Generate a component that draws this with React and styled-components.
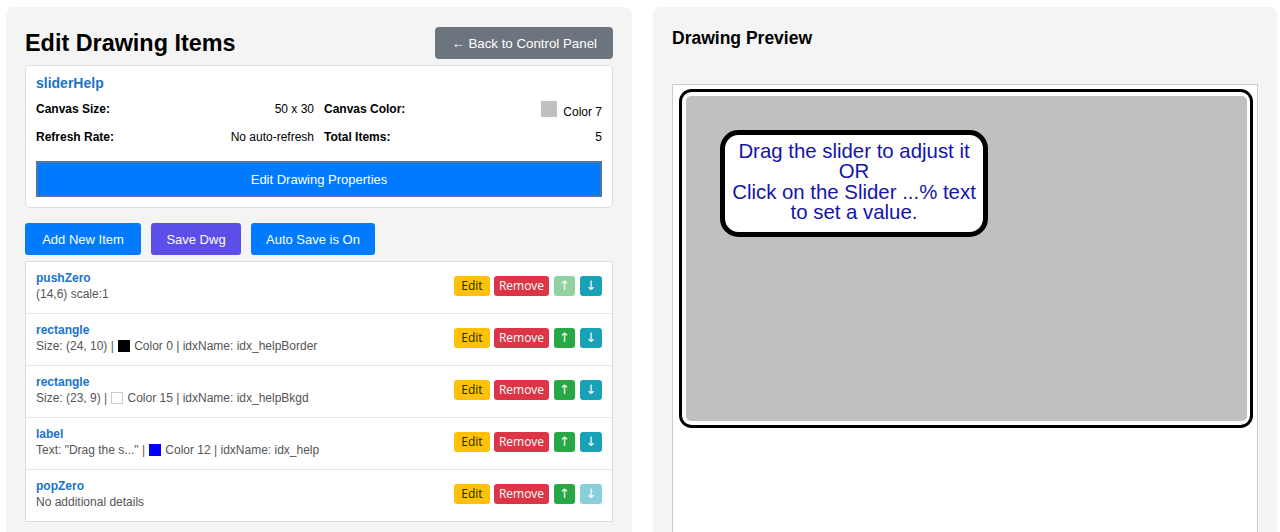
import React from "react";
import styled, { createGlobalStyle } from "styled-components";

const GlobalStyle = createGlobalStyle`
  html, body {
    margin: 0;
    padding: 0;
    background: #ffffff;
    overflow: hidden;
    font-family: "Liberation Sans", Arial, sans-serif;
  }
  #root {
    height: 532px;
    overflow: hidden;
  }
`;

const Page = styled.div`
  display: flex;
  gap: 21px;
  padding: 7px 9px 0 6px;
  height: 532px;
  box-sizing: border-box;
`;

const Panel = styled.div`
  flex: ${(p) => (p.$fixed ? "0 0 626px" : "1")};
  background: #f4f4f4;
  border-radius: 8px;
  padding: 20px 19px;
  box-sizing: border-box;
  min-height: 600px;
`;

const Header = styled.div`
  display: flex;
  justify-content: space-between;
  align-items: center;
  margin-bottom: 6px;
`;

const Title = styled.h2`
  margin: 0;
  font-size: 23.4px;
  font-weight: 700;
  color: #000;
`;

const BackButton = styled.button`
  height: 32px;
  padding: 0 16px;
  border: none;
  border-radius: 4px;
  background: #6c757d;
  color: #fff;
  font-family: "Liberation Sans", Arial, sans-serif;
  font-size: 13.3px;
  cursor: pointer;
`;

const InfoCard = styled.div`
  background: #fff;
  border: 1px solid #ddd;
  border-radius: 5px;
  padding: 9px 10px 10px;
`;

const DrawingName = styled.div`
  color: #1a73c9;
  font-weight: 700;
  font-size: 14px;
  line-height: 16px;
  margin-bottom: 10px;
`;

const InfoGrid = styled.div`
  display: grid;
  grid-template-columns: repeat(4, 1fr);
  column-gap: 10px;
  row-gap: 8px;
  font-size: 12px;
  line-height: 17px;
  color: #000;
`;

const Label = styled.div`
  font-weight: 700;
`;

const Value = styled.div`
  text-align: right;
`;

const CanvasSwatch = styled.span`
  display: inline-block;
  width: 16px;
  height: 16px;
  background: #c0c0c0;
  margin-right: 6px;
  margin-bottom: -1px;
`;

const WideButton = styled.button`
  display: block;
  width: 100%;
  height: 36px;
  margin-top: 15px;
  background: #007bff;
  color: #fff;
  border: 2px solid #56759c;
  font-family: "Liberation Sans", Arial, sans-serif;
  font-size: 13px;
  cursor: pointer;
`;

const ActionRow = styled.div`
  display: flex;
  gap: 10px;
  margin-top: 15px;
  margin-bottom: 6px;
`;

const ActionButton = styled.button`
  height: 32px;
  width: ${(p) => p.$w}px;
  padding: 0;
  border: none;
  border-radius: 3px;
  background: ${(p) => p.$bg || "#007bff"};
  color: #fff;
  font-family: "Liberation Sans", Arial, sans-serif;
  font-size: 13px;
  cursor: pointer;
`;

const ItemList = styled.div`
  background: #fff;
  border: 1px solid #ddd;
`;

const ItemRow = styled.div`
  display: flex;
  align-items: center;
  justify-content: space-between;
  padding: 8px 10px 11px;
  border-bottom: 1px solid #e6e6e6;
  &:last-child {
    border-bottom: none;
  }
`;

const ItemText = styled.div`
  font-size: 12px;
  line-height: 16px;
`;

const ItemName = styled.div`
  color: #1a73c9;
  font-weight: 700;
`;

const ItemDetails = styled.div`
  color: #555;
`;

const ColorChip = styled.span`
  display: inline-block;
  width: 12px;
  height: 12px;
  background: ${(p) => p.$color};
  border: 1px solid ${(p) => (p.$color === "#ffffff" ? "#ccc" : p.$color)};
  box-sizing: border-box;
  vertical-align: -2px;
  margin: 0 4px 0 1px;
`;

const ItemButtons = styled.div`
  display: flex;
  gap: 4px;
`;

const SmallButton = styled.button`
  height: 20px;
  width: ${(p) => p.$w}px;
  padding: 0;
  margin-left: ${(p) => (p.$arrow ? "1px" : "0")};
  border: none;
  border-radius: 3px;
  background: ${(p) => p.$bg};
  color: ${(p) => p.$fg || "#fff"};
  opacity: ${(p) => (p.disabled ? 0.5 : 1)};
  font-family: ${(p) =>
    p.$arrow ? '"DejaVu Sans", sans-serif' : '"Open Sans", "Liberation Sans", sans-serif'};
  font-size: ${(p) => (p.$arrow ? "13px" : "12px")};
  line-height: 20px;
  cursor: pointer;
`;

const PreviewTitle = styled.h3`
  margin: 2px 0 36px;
  font-size: 17.5px;
  line-height: 19px;
  font-weight: 700;
  color: #000;
`;

const CanvasBox = styled.div`
  width: 586px;
  height: 470px;
  box-sizing: border-box;
  background: #fff;
  border: 1px solid #ccc;
`;

const items = [
  {
    name: "pushZero",
    details: <>(14,6) scale:1</>,
    upDisabled: true,
  },
  {
    name: "rectangle",
    details: (
      <>
        Size: (24, 10) | <ColorChip $color="#000000" />Color 0 | idxName: idx_helpBorder
      </>
    ),
  },
  {
    name: "rectangle",
    details: (
      <>
        Size: (23, 9) | <ColorChip $color="#ffffff" />Color 15 | idxName: idx_helpBkgd
      </>
    ),
  },
  {
    name: "label",
    details: (
      <>
        Text: "Drag the s..." | <ColorChip $color="#0000ff" />Color 12 | idxName: idx_help
      </>
    ),
  },
  {
    name: "popZero",
    details: <>No additional details</>,
    downDisabled: true,
  },
];

const helpLines = [
  "Drag the slider to adjust it",
  "OR",
  "Click on the Slider ...% text",
  "to set a value.",
];

const Preview = () => (
  <svg width="584" height="468" viewBox="0 0 584 468">
    <rect x="7.5" y="5.5" width="571" height="336" rx="11" fill="#fff" stroke="#000" strokeWidth="3" />
    <rect x="13" y="11" width="561" height="325" rx="5" fill="#c0c0c0" />
    <rect x="49.5" y="47.5" width="263" height="102" rx="16" fill="#fff" stroke="#000" strokeWidth="5" />
    {helpLines.map((line, i) => (
      <text
        key={line}
        x="181"
        y={73 + i * 20.4}
        textAnchor="middle"
        fontFamily="Liberation Sans, Arial, sans-serif"
        fontSize="20.4"
        fill="#1414aa"
      >
        {line}
      </text>
    ))}
  </svg>
);

const App = () => {
  return (
    <>
      <GlobalStyle />
      <Page>
        <Panel $fixed>
          <Header>
            <Title>Edit Drawing Items</Title>
            <BackButton>← Back to Control Panel</BackButton>
          </Header>
          <InfoCard>
            <DrawingName>sliderHelp</DrawingName>
            <InfoGrid>
              <Label>Canvas Size:</Label>
              <Value>50 x 30</Value>
              <Label>Canvas Color:</Label>
              <Value>
                <CanvasSwatch />
                Color 7
              </Value>
              <Label>Refresh Rate:</Label>
              <Value>No auto-refresh</Value>
              <Label>Total Items:</Label>
              <Value>5</Value>
            </InfoGrid>
            <WideButton>Edit Drawing Properties</WideButton>
          </InfoCard>
          <ActionRow>
            <ActionButton $w={116}>Add New Item</ActionButton>
            <ActionButton $w={90} $bg="#5b4fe8">Save Dwg</ActionButton>
            <ActionButton $w={124}>Auto Save is On</ActionButton>
          </ActionRow>
          <ItemList>
            {items.map((item, i) => (
              <ItemRow key={i}>
                <ItemText>
                  <ItemName>{item.name}</ItemName>
                  <ItemDetails>{item.details}</ItemDetails>
                </ItemText>
                <ItemButtons>
                  <SmallButton $w={36} $bg="#ffc107" $fg="#212529">Edit</SmallButton>
                  <SmallButton $w={55} $bg="#dc3545">Remove</SmallButton>
                  <SmallButton $w={21} $arrow $bg="#28a745" disabled={item.upDisabled}>↑</SmallButton>
                  <SmallButton $w={22} $arrow $bg="#17a2b8" disabled={item.downDisabled}>↓</SmallButton>
                </ItemButtons>
              </ItemRow>
            ))}
          </ItemList>
        </Panel>
        <Panel>
          <PreviewTitle>Drawing Preview</PreviewTitle>
          <CanvasBox>
            <Preview />
          </CanvasBox>
        </Panel>
      </Page>
    </>
  );
};

export default App;
